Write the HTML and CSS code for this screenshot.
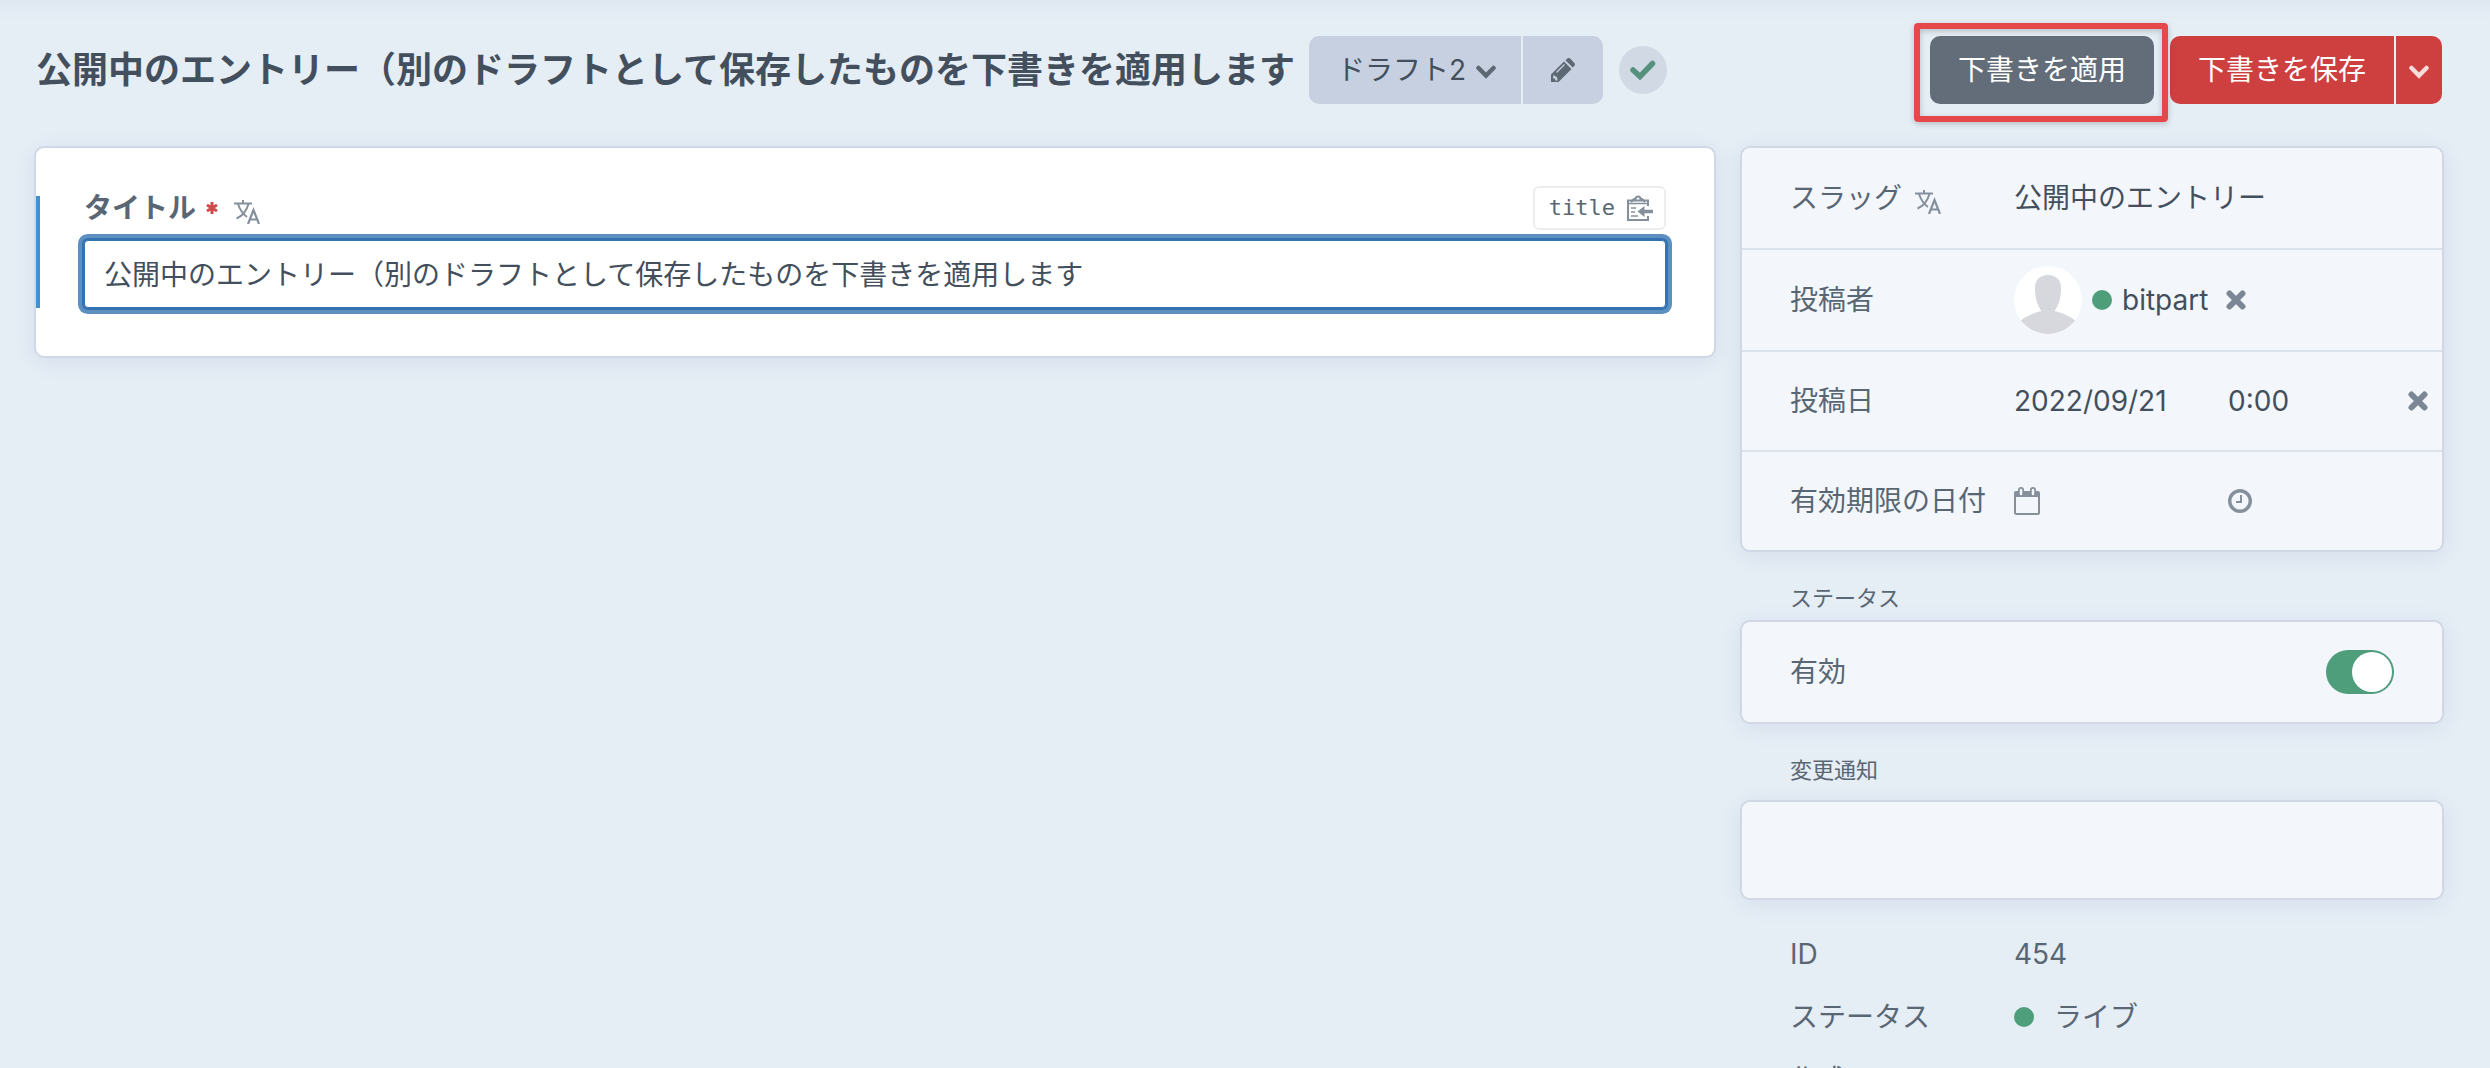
FILE: index.html
```
<!DOCTYPE html>
<html lang="ja">
<head>
    <meta charset="UTF-8">
    <meta name="viewport" content="width=device-width, initial-scale=1.0">
    <title>公開中のエントリー</title>
    <link rel="stylesheet" href="styles.css">
</head>
<body>
    <!-- Shared icon shapes -->
    <svg class="sprite" aria-hidden="true">
        <symbol id="icon-translate" viewBox="0 0 26 24">
            <path d="M0 3.500h18M9 0v3.500M4 4c2 6 5.500 10.500 9 13M14.500 4c-2 7-6 12-12 14.500" fill="none" stroke="currentColor" stroke-width="2"/>
            <path d="M14 24l5.500-14 5.500 14M16 19.500h7" fill="none" stroke="currentColor" stroke-width="2.200"/>
        </symbol>
        <symbol id="icon-chevron" viewBox="0 0 20 14">
            <path d="M2.500 3L10 10.500 17.500 3" fill="none" stroke="currentColor" stroke-width="4.500" stroke-linecap="round"/>
        </symbol>
        <symbol id="icon-remove" viewBox="0 0 20 20">
            <path d="M3.500 3.500l13 13M16.500 3.500l-13 13" fill="none" stroke="currentColor" stroke-width="6" stroke-linecap="round"/>
        </symbol>
    </svg>

    <header class="header">
        <h1 class="page-title">公開中のエントリー（別のドラフトとして保存したものを下書きを適用します</h1>
        <div class="btn-group">
            <button class="btn btn-draft">ドラフト2 <svg class="chevron"><use href="#icon-chevron"/></svg></button>
            <button class="btn btn-edit" aria-label="編集">
                <svg class="icon" viewBox="0 0 24 24">
                    <path d="M0 24v-7.500L13 3.500l7.500 7.500L7.500 24zM14.500 2.300L16.300.6c.8-.8 2-.8 2.800 0l4.300 4.300c.8.800.8 2 0 2.800L21.700 9.500z" fill="currentColor"/>
                    <path d="M5.500 14.500l8-8" fill="none" stroke="#c7d0e0" stroke-width="1.200"/>
                    <path d="M3 17.500v2h2v2h1.500" fill="none" stroke="#c7d0e0" stroke-width="1.800"/>
                </svg>
            </button>
        </div>
        <span class="saved">
            <svg class="check" viewBox="0 0 26 20"><path d="M3 10l7 6.500L22.500 3.500" fill="none" stroke="currentColor" stroke-width="5.500" stroke-linecap="round"/></svg>
        </span>
        <div class="actions">
            <div class="apply">
                <button class="btn btn-apply">下書きを適用</button>
            </div>
            <div class="btn-group">
                <button class="btn btn-save">下書きを保存</button>
                <button class="btn btn-save btn-menu" aria-label="メニュー"><svg class="chevron"><use href="#icon-chevron"/></svg></button>
            </div>
        </div>
    </header>

    <main class="content">
        <section class="card editor">
            <div class="field">
                <div class="field-heading">
                    <label class="field-label" for="title">タイトル</label>
                    <svg class="required" viewBox="0 0 12 12"><path d="M6 0v12M1 3l10 6M11 3L1 9" stroke="currentColor" stroke-width="3"/></svg>
                    <svg class="translate"><use href="#icon-translate"/></svg>
                    <button class="handle">title
                        <svg class="clipboard" viewBox="0 0 26 26">
                            <path d="M21 11V5.500H1v19.500H21v-4" fill="none" stroke="currentColor" stroke-width="2"/>
                            <path d="M2 8.500h18M4 13h5M4 17h4M4 21h7" stroke="currentColor" stroke-width="1.600"/>
                            <path d="M4 7l3-3h1.500a2.500 2.500 0 0 1 5 0H15L18 7" fill="none" stroke="currentColor" stroke-width="2"/>
                            <path d="M10.500 16.500l7-5.500v3.800H26v3.400h-8.500V22z" fill="currentColor"/>
                        </svg>
                    </button>
                </div>
                <input class="text-input" id="title" type="text" value="公開中のエントリー（別のドラフトとして保存したものを下書きを適用します">
            </div>
        </section>

        <aside class="details">
            <div class="card meta">
                <div class="row">
                    <label class="row-label" for="slug">スラッグ <svg class="translate"><use href="#icon-translate"/></svg></label>
                    <input class="plain-input" id="slug" type="text" value="公開中のエントリー">
                </div>
                <div class="row">
                    <span class="row-label">投稿者</span>
                    <div class="author">
                        <svg class="avatar" viewBox="0 0 68 68">
                            <circle cx="34" cy="34" r="34" fill="#fff"/>
                            <path d="M34 9c8 0 13 5 13 12.500 0 9-1.500 17-6.500 23.500 7 1.500 14.500 5 20.700 9.300a34 34 0 0 1-54.400 0C13 50 20.500 46.500 27.500 45 22.500 38.500 21 30.500 21 21.500 21 14 26 9 34 9z" fill="#d6d8de"/>
                        </svg>
                        <span class="dot"></span>
                        <span class="author-name">bitpart</span>
                        <button class="remove" aria-label="削除"><svg class="icon-x"><use href="#icon-remove"/></svg></button>
                    </div>
                </div>
                <div class="row short">
                    <label class="row-label" for="post-date">投稿日</label>
                    <div class="date-time">
                        <input class="plain-input" id="post-date" type="text" value="2022/09/21">
                        <input class="plain-input" type="text" aria-label="時刻" value="0:00">
                    </div>
                    <button class="remove" aria-label="クリア"><svg class="icon-x"><use href="#icon-remove"/></svg></button>
                </div>
                <div class="row short">
                    <span class="row-label">有効期限の日付</span>
                    <div class="date-time">
                        <svg class="calendar" viewBox="0 0 26 28">
                            <path d="M1 6v19.500c0 .8.700 1.500 1.500 1.500h21c.8 0 1.500-.7 1.500-1.500V6" fill="none" stroke="currentColor" stroke-width="2"/>
                            <path d="M0 10V6c0-1.200.8-2 2-2h22c1.200 0 2 .8 2 2v4z" fill="currentColor"/>
                            <path d="M7 3v4M19 3v4" stroke="currentColor" stroke-width="6" stroke-linecap="round"/>
                            <path d="M7 3v4M19 3v4" stroke="#f3f7fc" stroke-width="2.500" stroke-linecap="round"/>
                        </svg>
                        <svg class="icon" viewBox="0 0 24 24">
                            <circle cx="12" cy="12" r="10.300" fill="none" stroke="currentColor" stroke-width="3.400"/>
                            <path d="M13 6v7H8" fill="none" stroke="currentColor" stroke-width="2"/>
                        </svg>
                    </div>
                </div>
            </div>

            <h2 class="group-title status-title">ステータス</h2>
            <div class="card status">
                <label for="enabled">有効</label>
                <input class="switch" id="enabled" type="checkbox" role="switch" checked>
            </div>

            <h2 class="group-title notes-title"><label for="notes">変更通知</label></h2>
            <textarea class="card notes" id="notes"></textarea>

            <dl class="info">
                <dt>ID</dt>
                <dd>454</dd>
                <dt>ステータス</dt>
                <dd><span class="dot"></span>ライブ</dd>
                <dt>作成日</dt>
                <dd></dd>
            </dl>
        </aside>
    </main>
</body>
</html>
```
FILE: styles.css
```
* {
    box-sizing: border-box;
}

html {
    height: 100%;
    overflow: hidden;
}

body {
    height: 100%;
    margin: 0;
    overflow: hidden;
    background: linear-gradient(#dfe7f1, #e5edf5 20px) #e5edf5;
    color: #596673;
    font-family: Inter, "Noto Sans CJK JP", sans-serif;
    font-size: 28px;
    line-height: 40px;
}

button,
input,
textarea {
    font: inherit;
    color: inherit;
}

button {
    padding: 0;
    border: none;
    background: none;
    cursor: pointer;
}

svg {
    flex: none;
}

.sprite {
    position: absolute;
    width: 0;
    height: 0;
}

.icon {
    width: 24px;
    height: 24px;
}

.translate {
    width: 26px;
    height: 24px;
    margin-top: 8px;
    color: #85909c;
}

.chevron {
    width: 20px;
    height: 14px;
    margin-top: 4px;
}

/* Header */
.header {
    display: flex;
    align-items: center;
    padding: 36px 48px 42px 36px;
}

.page-title {
    margin: 0 14px 0 0;
    color: #434f5c;
    font-size: 36px;
    font-weight: bold;
    white-space: nowrap;
}

.btn-group {
    display: flex;
    gap: 2px;
    border-radius: 10px;
    overflow: hidden;
}

.btn {
    display: flex;
    align-items: center;
    justify-content: center;
    gap: 8px;
    height: 68px;
    padding: 0 28px;
    white-space: nowrap;
}

.btn-draft,
.btn-edit {
    background-color: #c7d0e0;
    color: #434f5c;
}

.btn-draft {
    gap: 10px;
    padding-right: 25px;
}

.btn-draft .chevron,
.btn-edit .icon {
    color: #5c6874;
}

.saved {
    display: flex;
    align-items: center;
    justify-content: center;
    width: 48px;
    height: 48px;
    margin-left: 16px;
    border-radius: 50%;
    background-color: #d1d9e5;
    color: #56917d;
}

.check {
    width: 26px;
    height: 20px;
}

.actions {
    display: flex;
    gap: 16px;
    margin-left: auto;
}

.apply {
    position: relative;
}

/* Marker frame around the apply button */
.apply::after {
    content: "";
    position: absolute;
    inset: -13px -14px -18px -16px;
    border: 6px solid #e5484a;
    border-radius: 4px;
    box-shadow: 0 2px 6px rgba(0, 0, 0, 0.2), inset 0 2px 6px rgba(0, 0, 0, 0.2);
    pointer-events: none;
}

.btn-apply {
    border-radius: 10px;
    background-color: #626d79;
    color: #fff;
}

.btn-save {
    background-color: #ce3f3f;
    color: #fff;
}

.btn-menu {
    padding: 0 13px;
    color: #f8dcdc;
}

/* Columns */
.content {
    display: grid;
    grid-template-columns: 1fr 704px;
    gap: 24px;
    padding: 0 46px 0 34px;
    align-items: start;
}

.card {
    border: 2px solid #cfd8e4;
    border-radius: 10px;
    background-color: #f3f7fc;
    box-shadow: 0 4px 24px rgba(31, 60, 120, 0.07);
}

.editor {
    padding: 48px 0;
    background-color: #fff;
}

.field {
    display: flow-root;
    padding: 0 48px 0 44px;
    border-left: 4px solid #4190d2;
}

.field-heading {
    display: flex;
    align-items: center;
    height: 44px;
    margin-top: -10px;
}

.field-label {
    font-weight: bold;
}

.required {
    width: 12px;
    height: 12px;
    margin: 0 16px 0 10px;
    color: #cf4b4b;
}

.handle {
    display: flex;
    align-items: center;
    gap: 12px;
    height: 44px;
    margin-left: auto;
    padding: 0 11px 0 14px;
    border: 2px solid #ebedef;
    border-radius: 6px;
    font-family: "DejaVu Sans Mono", monospace;
    font-size: 22px;
}

.clipboard {
    width: 26px;
    height: 26px;
    color: #85909c;
}

.text-input {
    display: block;
    width: 100%;
    height: 68px;
    margin-top: 10px;
    padding: 0 19px 2px;
    border: 1px solid #3572b0;
    border-radius: 4px;
    outline: none;
    background-color: #fff;
    box-shadow: 0 0 0 2px #3572b0, 0 0 0 6px #5d90c1;
    color: #434f5c;
}

/* Details sidebar */
.row {
    display: flex;
    align-items: center;
    height: 102px;
    padding-left: 48px;
    border-bottom: 2px solid #dde3ea;
}

.short {
    height: 100px;
}

.row:last-child {
    height: 98px;
    border-bottom: none;
}

.row-label {
    display: flex;
    align-items: center;
    gap: 13px;
    flex: none;
    width: 224px;
    white-space: nowrap;
}

.plain-input {
    width: 100%;
    min-width: 0;
    padding: 0;
    border: none;
    outline: none;
    background: none;
    color: #434f5c;
}

.author {
    display: flex;
    align-items: center;
    gap: 10px;
    color: #434f5c;
}

.avatar {
    width: 68px;
    height: 68px;
}

.dot {
    flex: none;
    width: 20px;
    height: 20px;
    border-radius: 50%;
    background-color: #4e9e7c;
}

.remove {
    display: flex;
    padding: 0 8px;
    color: #7b8794;
}

.icon-x {
    width: 20px;
    height: 20px;
}

.date-time {
    display: grid;
    grid-template-columns: 214px 1fr;
    align-items: center;
    flex: 1;
    color: #85909c;
}

.short .remove {
    padding: 0 14px;
}

.calendar {
    width: 26px;
    height: 28px;
}

.group-title {
    margin: 0 50px;
    font-size: 22px;
    font-weight: normal;
    line-height: 32px;
}

.status-title {
    padding-top: 30px;
    padding-bottom: 6px;
}

.status {
    display: flex;
    align-items: center;
    justify-content: space-between;
    height: 104px;
    padding: 0 48px;
}

.switch {
    appearance: none;
    display: flex;
    justify-content: flex-end;
    width: 68px;
    height: 44px;
    margin: 0;
    padding: 2px;
    border-radius: 22px;
    background-color: #4e9e7c;
}

.switch::before {
    content: "";
    width: 40px;
    height: 40px;
    border-radius: 50%;
    background-color: #fff;
}

.notes-title {
    padding-top: 30px;
    padding-bottom: 14px;
}

.notes {
    display: block;
    width: 100%;
    height: 100px;
    padding: 24px 48px;
    resize: none;
    outline: none;
}

.info {
    display: grid;
    grid-template-columns: 224px 1fr;
    row-gap: 23px;
    margin: 34px 50px 0;
}

.info dt,
.info dd {
    display: flex;
    align-items: center;
    gap: 20px;
    margin: 0;
}
```
